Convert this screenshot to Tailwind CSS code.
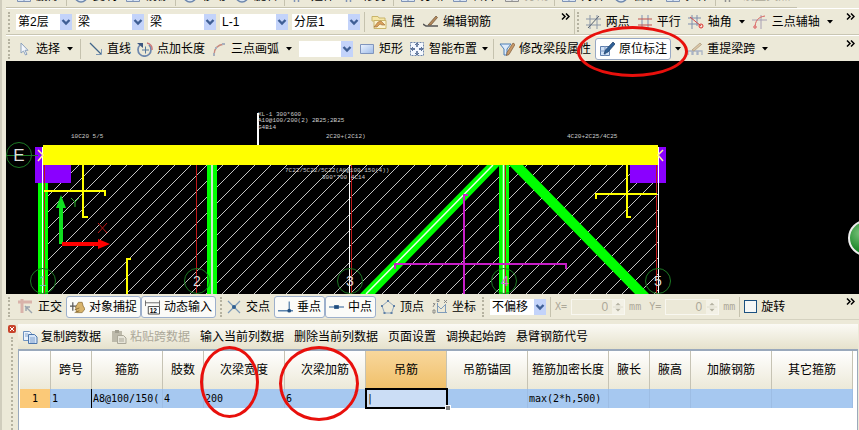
<!DOCTYPE html>
<html lang="zh-CN">
<head>
    <meta charset="UTF-8">
    <meta name="viewport" content="width=device-width, initial-scale=1.0">
    <title>梁原位标注</title>
    <script src="https://cdn.jsdelivr.net/npm/@tailwindcss/browser@4"></script>
</head>
<body class="bg-[#ece9d8] text-black text-[12px] leading-4 font-['Liberation_Sans','Noto_Sans_CJK_SC',sans-serif]">

<!-- Shared glyphs -->
<svg class="hidden">
    <symbol id="chev" viewBox="0 0 12 16"><path d="M2.500 6l3.500 3.500L9.500 6" fill="none" stroke="#3f5f95" stroke-width="2.400"/></symbol>
    <symbol id="tri" viewBox="0 0 6 4"><path d="M0 0h6L3 3.500z"/></symbol>
    <symbol id="more" viewBox="0 0 9 7"><path d="M1 .5l3 3-3 3M5 .5l3 3-3 3" fill="none" stroke="#000" stroke-width="1.500"/></symbol>
    <symbol id="spin" viewBox="0 0 12 16"><path d="M3 6l3-3 3 3zM3 10l3 3 3-3z" fill="#b5b2a2"/><path d="M0 8h12" stroke="#dcd9c8"/></symbol>
    <symbol id="bars" viewBox="0 0 16 16"><path d="M3.500 2v12M7.500 2v12M11.500 2v9" fill="none" stroke="#7f93b5" stroke-width="1.500"/></symbol>
    <symbol id="disc" viewBox="0 0 16 16"><circle cx="8" cy="8" r="6" fill="#dbe6f4" stroke="#6d87ad" stroke-width="1.500"/></symbol>
    <symbol id="box" viewBox="0 0 16 16"><path d="M1.500 3.500h13v10h-13zM8 3v10" fill="#dbe6f4" stroke="#7f93b5"/></symbol>
</svg>

<div class="min-h-screen flex flex-col pl-1 border-l-2 border-l-[#d0cdbd] overflow-hidden">

    <!-- Edit toolbar, scrolled mostly out of view -->
    <div class="h-2 shrink-0 overflow-hidden flex items-end border-b border-[#c5c2ae] whitespace-nowrap mr-[62px]">
        <div class="flex items-center gap-2 pl-[10px] pb-px">
            <button class="flex gap-1"><svg class="size-4"><use href="#box"/></svg>删除</button>
            <span class="w-px h-5 bg-[#c5c2ae] -mx-0.5"></span>
            <button class="flex gap-1"><svg class="size-4"><use href="#disc"/></svg>复制</button>
            <button class="flex gap-1"><svg class="size-4"><use href="#box"/></svg>镜像</button>
            <span class="w-px h-5 bg-[#c5c2ae] -mx-0.5"></span>
            <button class="flex gap-1"><svg class="size-4"><use href="#disc"/></svg>移动</button>
            <button class="flex gap-1"><svg class="size-4"><use href="#disc"/></svg>旋转</button>
            <span class="w-px h-5 bg-[#c5c2ae] -mx-0.5"></span>
            <button class="flex gap-1"><svg class="size-4"><use href="#bars"/></svg>延伸</button>
            <button class="flex gap-1"><svg class="size-4"><use href="#bars"/></svg>修剪</button>
            <span class="w-px h-5 bg-[#c5c2ae] -mx-0.5"></span>
            <button class="flex gap-1"><svg class="size-4"><use href="#box"/></svg>打断</button>
            <button class="flex gap-1"><svg class="size-4"><use href="#box"/></svg>合并</button>
            <button class="flex gap-1 text-[#aca899]"><svg class="size-4 grayscale"><use href="#box"/></svg>分割</button>
            <span class="w-px h-5 bg-[#c5c2ae] -mx-0.5"></span>
            <button class="flex gap-1"><svg class="size-4"><use href="#box"/></svg>对齐</button>
            <button class="flex gap-1"><svg class="size-4"><use href="#disc"/></svg>偏移</button>
            <button class="flex gap-1"><svg class="size-4"><use href="#box"/></svg>拉伸</button>
            <span class="w-px h-5 bg-[#c5c2ae] -mx-0.5"></span>
            <button class="flex gap-1 text-[#aca899]"><svg class="size-4 grayscale"><use href="#bars"/></svg>设置夹点</button>
        </div>
    </div>

    <!-- Component selectors / axis toolbar -->
    <div class="h-[27px] shrink-0 flex border-t border-t-white border-b border-b-[#c9c6b3] whitespace-nowrap">
        <div class="w-2/3 flex items-center pl-0.5 pr-1 gap-1 border-r border-[#c5c2ae]">
            <span class="h-5 border-l-2 border-dotted border-[#b5b2a0] mr-0.5"></span>
            <label class="relative w-14 h-4"><select aria-label="楼层" class="appearance-none w-full h-full bg-white pl-0.5 leading-4 outline-none"><option>第2层</option></select><svg class="absolute right-0 top-0 w-3 h-4 bg-[#c3d3fa] pointer-events-none"><use href="#chev"/></svg></label>
            <label class="relative w-[68px] h-4"><select aria-label="构件类别" class="appearance-none w-full h-full bg-white pl-0.5 leading-4 outline-none"><option>梁</option></select><svg class="absolute right-0 top-0 w-3 h-4 bg-[#c3d3fa] pointer-events-none"><use href="#chev"/></svg></label>
            <label class="relative w-[68px] h-4"><select aria-label="构件类型" class="appearance-none w-full h-full bg-white pl-0.5 leading-4 outline-none"><option>梁</option></select><svg class="absolute right-0 top-0 w-3 h-4 bg-[#c3d3fa] pointer-events-none"><use href="#chev"/></svg></label>
            <label class="relative w-[68px] h-4"><select aria-label="构件名称" class="appearance-none w-full h-full bg-white pl-0.5 leading-4 outline-none"><option>L-1</option></select><svg class="absolute right-0 top-0 w-3 h-4 bg-[#c3d3fa] pointer-events-none"><use href="#chev"/></svg></label>
            <label class="relative w-[68px] h-4"><select aria-label="分层" class="appearance-none w-full h-full bg-white pl-0.5 leading-4 outline-none"><option>分层1</option></select><svg class="absolute right-0 top-0 w-3 h-4 bg-[#c3d3fa] pointer-events-none"><use href="#chev"/></svg></label>
            <span class="w-px h-5 bg-[#c5c2ae]"></span>
            <button class="flex items-center gap-1 ml-0.5">
                <svg class="size-4" viewBox="0 0 16 16"><path d="M1 2.500h6l1 1.500h6v3H1z" fill="#f6e7a8" stroke="#c9b56a"/><path d="M3 6.500h12v8H3z" fill="#fbf3cf" stroke="#c9b56a"/><path d="M3 13l4-5 3-1 4 4-3 0-2-1-3 3z" fill="#d9a15c" stroke="#9c6a35" stroke-width=".6"/></svg>属性</button>
            <button class="flex items-center gap-1 ml-1">
                <svg class="size-4" viewBox="0 0 16 16"><path d="M0 10l3 2h12" fill="none" stroke="#555" stroke-width="1.500"/><path d="M5 11l8-9 1.500 1.500L8 11z" fill="#b58a5c" stroke="#6b5138" stroke-width=".7"/></svg>编辑钢筋</button>
            <button aria-label="更多" class="ml-auto self-start mt-1"><svg class="w-[9px] h-[7px]"><use href="#more"/></svg></button>
        </div>
        <div class="w-1/3 flex items-center pl-0.5 pr-1 gap-[7px]">
            <span class="h-5 border-l-2 border-dotted border-[#b5b2a0]"></span>
            <button class="flex items-center gap-1">
                <svg class="size-4" viewBox="0 0 16 16" fill="none"><path d="M4 1v14M11 1v14M0 5h15M0 11h15" stroke="#8b97a8"/><path d="M2 14L13 2" stroke="#55606e"/></svg>两点</button>
            <button class="flex items-center gap-1">
                <svg class="size-4" viewBox="0 0 16 16" fill="none"><path d="M5 1v14M11 1v14" stroke="#7f93b5"/><path d="M1 5h14M1 11h14" stroke="#c0504d"/></svg>平行</button>
            <button class="flex items-center gap-1">
                <svg class="size-4" viewBox="0 0 16 16" fill="none"><path d="M4 1v14M9 1v11M0 4h13M0 10h11" stroke="#7f8fae"/><path d="M2 3l11 9" stroke="#d24b4b"/><circle cx="13" cy="12" r="2" stroke="#e03030"/></svg>轴角</button>
            <svg class="w-1.5 h-1"><use href="#tri"/></svg>
            <button class="flex items-center gap-1">
                <svg class="size-4" viewBox="0 0 16 16" fill="none"><path d="M9 1v14M0 6h15" stroke="#a8a0b4"/><path d="M3 14C3 7 6 3 13 2" stroke="#d9605c"/><circle cx="3" cy="13" r="1.300" stroke="#e07070"/></svg>三点辅轴</button>
            <svg class="w-1.5 h-1"><use href="#tri"/></svg>
            <button aria-label="更多" class="ml-auto self-start mt-1"><svg class="w-[9px] h-[7px]"><use href="#more"/></svg></button>
        </div>
    </div>

    <!-- Drawing toolbar -->
    <div class="relative h-[26px] shrink-0 flex items-center pl-0.5 pr-1 gap-1.5 border-t border-white whitespace-nowrap">
        <span class="h-5 border-l-2 border-dotted border-[#b5b2a0]"></span>
        <button class="flex items-center gap-1">
            <svg class="size-4" viewBox="0 0 16 16"><path d="M5 2v10l2.500-2 2 4 1.500-.7-2-4H12z" fill="#f4f7fb" stroke="#8da2bd"/></svg>选择</button>
        <svg class="w-1.5 h-1 mx-px"><use href="#tri"/></svg>
        <span class="w-px h-5 bg-[#c5c2ae]"></span>
        <button class="flex items-center gap-1">
            <svg class="size-4" viewBox="0 0 16 16" fill="none"><path d="M3 2l11 11" stroke="#41658a" stroke-width="1.300"/><path d="M9 13.500h5.500V8" stroke="#7d98b5"/></svg>直线</button>
        <button class="flex items-center gap-1">
            <svg class="size-4" viewBox="0 0 16 16" fill="none"><path d="M3 4a6.500 6.500 0 1 0 9 0" stroke="#6d87ad" stroke-width="1.700"/><path d="M10 2a6 6 0 0 1 5 7" stroke="#c77" stroke-width="1.400"/><path d="M0 2h6v5z" fill="#3c5680"/><path d="M5 9h7M8.500 5.500v7" stroke="#56789c"/></svg>点加长度</button>
        <button class="flex items-center gap-1">
            <svg class="size-4" viewBox="0 0 16 16" fill="none"><path d="M3 14C3 8 6 4 13 3" stroke="#c88b80" stroke-width="1.500"/><path d="M2 12h2v3H2zM11 2h3v2h-3zM4 6h2v2H4z" fill="#a8b0bd"/></svg>三点画弧</button>
        <svg class="w-1.5 h-1 mx-px"><use href="#tri"/></svg>
        <label class="relative w-[54px] h-4"><select aria-label="绘制方式" class="appearance-none w-full h-full bg-white outline-none"><option></option></select><svg class="absolute right-0 top-0 w-3 h-4 bg-[#c3d3fa] pointer-events-none"><use href="#chev"/></svg></label>
        <button class="flex items-center gap-1">
            <svg class="size-4" viewBox="0 0 16 16"><defs><linearGradient id="rect" x2="1" y2="1"><stop stop-color="#eef4ff"/><stop offset="1" stop-color="#9dbbe8"/></linearGradient></defs><path d="M1.500 3.500h13v9h-13z" fill="url(#rect)" stroke="#8095bd"/></svg>矩形</button>
        <button class="flex items-center gap-1">
            <svg class="size-4" viewBox="0 0 16 16" fill="none"><path d="M1.500 1.500h13v13h-13z" fill="#f4f8ff" stroke="#6f87ac" stroke-dasharray="2 1"/><path d="M8 3v3M8 10v3M3 8h3M10 8h3" stroke="#344f7d" stroke-width="1.300"/><path d="M6 4l2-2 2 2M6 12l2 2 2-2M4 6L2 8l2 2M12 6l2 2-2 2" stroke="#344f7d" stroke-width=".8"/></svg>智能布置</button>
        <svg class="w-1.5 h-1 -ml-px"><use href="#tri"/></svg>
        <span class="w-px h-5 bg-[#c5c2ae] -mx-px"></span>
        <button class="flex items-center gap-1">
            <svg class="size-4" viewBox="0 0 16 16"><path d="M1 3h11L8 8v6H5V8z" fill="#dcebfb" stroke="#4d7fb5"/><path d="M14 2l2 1.500-6 10-2.500 1 .5-3z" fill="#c99a6a" stroke="#7c5a38" stroke-width=".7"/></svg>修改梁段属性</button>
        <button class="flex items-center gap-1 h-[22px] px-[3px] -ml-0.5 bg-white border border-[#98a9c4] rounded-[3px]">
            <svg class="size-4" viewBox="0 0 16 16"><path d="M1.500 5.500h9v9h-9z" fill="#cfe0f6" stroke="#5f7fae"/><path d="M1 10h10M6 5v10" stroke="#7d98c2"/><path d="M14 1l2 2-7 8-4 2 1.500-4z" fill="#2f6096" stroke="#1e3f68" stroke-width=".7"/></svg>原位标注</button>
        <svg class="w-1.5 h-1 -ml-0.5"><use href="#tri"/></svg>
        <button class="flex items-center gap-1">
            <svg class="size-4" viewBox="0 0 16 16" fill="none"><path d="M1 14v-4h4v4M6 14v-4h4v4M11 14v-4h4v4" stroke="#a9b3c4" stroke-width="1.300"/><path d="M5 9l8-7 1.500 1.500L7 10z" fill="#dcc6a8" stroke="#a89878" stroke-width=".7"/></svg>重提梁跨</button>
        <svg class="w-1.5 h-1 mx-px"><use href="#tri"/></svg>
        <button aria-label="更多" class="ml-auto self-start mt-1"><svg class="w-[9px] h-[7px]"><use href="#more"/></svg></button>
        <span class="absolute z-10 left-[571px] -top-[10px] w-[111px] h-[51px] rounded-[50%] border-[3px] border-[#e8100c] pointer-events-none"></span>
    </div>

    <!-- Model view -->
    <svg class="block w-full bg-black shrink-0" viewBox="6 61 853 233" preserveAspectRatio="xMinYMin meet">
        <defs>
            <pattern id="hatch" width="16" height="16" patternUnits="userSpaceOnUse"><path d="M-1 5L5-1M3 17L17 3" stroke="#d8d8d8" fill="none" stroke-width=".9"/></pattern>
            <radialGradient id="ball" cx=".35" cy=".35"><stop stop-color="#7cc47c"/><stop offset="1" stop-color="#1f8a2c"/></radialGradient>
        </defs>
        <path d="M43 165h615v129H43z" fill="url(#hatch)"/>

        <!-- columns -->
        <path d="M35 147h8v18h28v18H35zM658 147h8v36h-36v-18h28z" fill="#8a00ff"/>

        <!-- beams -->
        <g fill="#0f0">
            <path d="M38 183h10v111H38zM207 165h10v129h-10zM499 165h10v129h-10z"/>
            <path d="M487 165h13L375 294h-15zM509 165h14L649 294h-14z"/>
        </g>
        <path d="M212 165v129" stroke="#c9e8c9" stroke-width="2"/>
        <path d="M493 165L366 294M503.500 165v129" stroke="#eaffea" stroke-width="1.500"/>
        <path d="M196.500 165v129M505.500 165v129M351.500 165v129M656.500 165v129M44.500 165v129" stroke="#c01818" stroke-width="1"/>
        <path d="M42.500 147v147M349.500 165v129M658.500 147v147" stroke="#fff" stroke-width="1"/>
        <path d="M43 145h615v20H43z" fill="#ff0"/>
        <path d="M258 113v32" stroke="#fff" stroke-width="2"/>
        <path d="M38 150l5 5-5 6M663 150l-5 5 5 6" fill="none" stroke="#fff2a0" stroke-width="1.500"/>

        <!-- slab bars -->
        <path d="M83 165v52h5M44 191h61v5M131 259h-4v35M627 165v52h4M657 194h-61v5" fill="none" stroke="#ff0" stroke-width="2"/>
        <path d="M468 195h-4v99M395 269v-5h171v5" fill="none" stroke="#c81ec8" stroke-width="2"/>

        <!-- axis bubbles -->
        <g fill="none" stroke="#1c7a24">
            <circle cx="19" cy="155" r="12.500"/><path d="M6 155.500h32"/>
            <circle cx="43" cy="281" r="12.500"/><circle cx="197" cy="281" r="12.500"/><circle cx="350" cy="281" r="12.500"/><circle cx="504" cy="281" r="12.500"/><circle cx="658" cy="281" r="12.500"/>
        </g>
        <g fill="#ddd" font-family="Liberation Sans" font-size="14" text-anchor="middle">
            <text x="19" y="161" font-size="17">E</text>
            <text x="43" y="286" fill="#5fd0b0">1</text>
            <text x="197" y="286">2</text>
            <text x="350" y="286">3</text>
            <text x="505" y="286" fill="#d070d0">4</text>
            <text x="658" y="286">5</text>
        </g>

        <!-- UCS -->
        <path d="M59 244v-36h-3l5-13 5 13h-3v36z" fill="#10e020"/>
        <path d="M62 242h36v-3l12 5-12 5v-3H62z" fill="#f00"/>
        <path d="M71 198l4 4 4-4M75 202v5" fill="none" stroke="#2fb52f"/>
        <path d="M98 223l9 10M107 223l-9 10" stroke="#c01818"/>

        <!-- reinforcement notes -->
        <g fill="#ccc" font-family="Liberation Mono" font-size="6">
            <text x="71" y="138">10C20 5/5</text>
            <text x="258" y="116">XL-1 300*600</text>
            <text x="258" y="122">A10@100/200(2) 2B25;2B25</text>
            <text x="258" y="129">G4B14</text>
            <text x="326" y="138">2C20+(2C12)</text>
            <text x="567" y="138">4C20+2C25/4C25</text>
            <text x="285" y="172">7C22/5C22/5C22(A8@100/150(4))</text>
            <text x="322" y="179">300*700 4C14</text>
        </g>

        <circle cx="866" cy="238" r="17" fill="url(#ball)" stroke="#eee" stroke-width="2"/>
    </svg>

    <!-- Snap toolbar -->
    <div class="h-[26px] shrink-0 flex items-center pl-0.5 pr-1 gap-1 border-b border-[#d5d2c0] whitespace-nowrap">
        <span class="h-5 border-l-2 border-dotted border-[#b5b2a0] mr-1"></span>
        <button class="flex items-center gap-1">
            <svg class="size-4" viewBox="0 0 16 16" fill="none"><path d="M0 3h14M4 0v14" stroke="#d9b3aa" stroke-width="3"/><path d="M7 7l7 7M8 12V8h4" stroke="#9aa3ad" stroke-width="1.400"/></svg>正交</button>
        <div class="flex">
            <button class="flex items-center gap-1 h-[22px] w-[75px] px-[3px] bg-[#fbfbf8] border border-[#9db0cc] rounded-[3px]">
                <svg class="size-4" viewBox="0 0 16 16"><path d="M0 7h8M3 3v9" stroke="#555" stroke-width="1.300"/><path d="M6 8l3-5h4l1 4 2 3-3 4H7z" fill="#d8b36a" stroke="#8b6d36" stroke-width=".8"/><path d="M5 11l5-2M5 14l5-2" stroke="#8b6d36"/></svg>对象捕捉</button>
            <button class="flex items-center gap-1 h-[22px] w-[75px] px-[3px] bg-[#fbfbf8] border border-[#9db0cc] rounded-[3px]">
                <svg class="size-4" viewBox="0 0 16 16" fill="none"><path d="M0 3.500h16M.5 1v6M15.500 1v6" stroke="#666"/><path d="M3.500 7.500h12v8h-12z" fill="#fff" stroke="#444"/><text x="5" y="14" fill="#000" font-size="7" font-family="Liberation Sans" font-weight="700">12</text></svg>动态输入</button>
        </div>
        <span class="h-5 border-l-2 border-dotted border-[#b5b2a0]"></span>
        <button class="flex items-center gap-1">
            <svg class="size-4" viewBox="0 0 16 16"><path d="M2 2l12 12M14 2L2 14" stroke="#7d9ab8" stroke-width="1.200"/><circle cx="8" cy="8" r="2" fill="#2f5f92"/></svg>交点</button>
        <div class="flex">
            <button class="flex items-center gap-1 h-[22px] w-[51px] px-[3px] bg-[#fbfbf8] border border-[#9db0cc] rounded-[3px]">
                <svg class="size-4" viewBox="0 0 16 16"><path d="M0 12h16M12 2v10" stroke="#5b83ad" stroke-width="1.400"/><circle cx="12" cy="12" r="2" fill="#1f4d80"/></svg>垂点</button>
            <button class="flex items-center gap-1 h-[22px] w-[51px] px-[3px] bg-[#fbfbf8] border border-[#9db0cc] rounded-[3px]">
                <svg class="size-4" viewBox="0 0 16 16"><path d="M0 8h16" stroke="#5b83ad" stroke-width="1.400"/><path d="M5.500 6h5v4h-5z" fill="#1f4d80"/></svg>中点</button>
        </div>
        <button class="flex items-center gap-1">
            <svg class="size-4" viewBox="0 0 16 16" fill="none"><path d="M8 2l6 5-2.500 7h-7L2 7z" stroke="#8ea6c0"/><path d="M7 1h2v2H7zM13 6h2v2h-2zM1 6h2v2H1zM3.500 13h2v2h-2zM10.500 13h2v2h-2z" fill="#5f80a5"/></svg>顶点</button>
        <button class="flex items-center gap-1 ml-1">
            <svg class="size-4" viewBox="0 0 16 16" fill="none"><path d="M5.500 4v9.500H15M5 6l4 4 5-5M13.500 6v8" stroke="#7f9cba"/><path d="M1 4l2 2M3 4l-2 4M12 1l3 3M15 1l-3 3M1 11h2v3H1zM5 .5h2v2H5z" stroke="#777" stroke-width=".8"/></svg>坐标</button>
        <span class="h-5 border-l-2 border-dotted border-[#b5b2a0] mx-0.5"></span>
        <label class="relative w-14 h-4"><select aria-label="偏移方式" class="appearance-none w-full h-full bg-white pl-0.5 leading-4 outline-none"><option>不偏移</option></select><svg class="absolute right-0 top-0 w-3 h-4 bg-[#c3d3fa] pointer-events-none"><use href="#chev"/></svg></label>
        <span class="w-px h-5 bg-[#c5c2ae]"></span>
        <label for="dx" class="text-[#aca899] font-['DejaVu_Sans_Mono',monospace] text-[10px]">X=</label>
        <div class="flex h-4 w-[54px] border border-[#f8f7f0]">
            <input id="dx" type="text" value="0" disabled class="min-w-0 flex-1 bg-transparent text-right text-[#aca899] pr-1">
            <svg class="w-3 h-full bg-[#f3f1e6]" viewBox="0 0 12 16"><use href="#spin"/></svg>
        </div>
        <span class="text-[#aca899] font-['DejaVu_Sans_Mono',monospace] text-[10px] mr-1">mm</span>
        <label for="dy" class="text-[#aca899] font-['DejaVu_Sans_Mono',monospace] text-[10px]">Y=</label>
        <div class="flex h-4 w-[54px] border border-[#f8f7f0]">
            <input id="dy" type="text" value="0" disabled class="min-w-0 flex-1 bg-transparent text-right text-[#aca899] pr-1">
            <svg class="w-3 h-full bg-[#f3f1e6]" viewBox="0 0 12 16"><use href="#spin"/></svg>
        </div>
        <span class="text-[#aca899] font-['DejaVu_Sans_Mono',monospace] text-[10px]">mm</span>
        <span class="w-px h-5 bg-[#c5c2ae]"></span>
        <input id="rotate" type="checkbox" class="appearance-none size-[13px] border border-[#1c5180] bg-[#f7f8f6]">
        <label for="rotate">旋转</label>
        <button aria-label="更多" class="ml-auto self-start mt-1"><svg class="w-[9px] h-[7px]"><use href="#more"/></svg></button>
    </div>

    <!-- In-place annotation panel -->
    <div class="relative flex-1 flex mt-1 pr-px">
        <div class="w-3 shrink-0 flex flex-col items-center gap-1 pt-px">
            <button aria-label="关闭" class="size-2 bg-[#c8442c] rounded-[2px] flex"><svg class="size-2" viewBox="0 0 8 8"><path d="M2 2l4 4M6 2L2 6" stroke="#fff"/></svg></button>
            <span class="flex-1 border-l-2 border-dotted border-[#b5b2a0]"></span>
        </div>
        <div class="flex-1 flex flex-col">
            <div class="h-[25px] flex items-center gap-[10px] pl-1 bg-linear-to-b from-[#fbfaf5] to-[#e6e2cc] whitespace-nowrap">
                <button class="flex items-center gap-[3px]">
                    <svg class="size-4" viewBox="0 0 16 16"><path d="M1.500 2.500h6l2 2v7h-8z" fill="#eaf2fc" stroke="#6f93c0"/><path d="M6.500 5.500h6l2.500 2.500v6.500H6.500z" fill="#d5e5f8" stroke="#4c76ac"/><path d="M8 9h5M8 11h5M8 13h5M3 5h3M3 7h3" stroke="#6f93c0" stroke-width=".8"/></svg>复制跨数据</button>
                <button disabled class="flex items-center gap-[3px] text-[#aca899]">
                    <svg class="size-4" viewBox="0 0 16 16"><path d="M1 2h10v11H1z" fill="#bdbaab"/><path d="M4 1h4v3H4z" fill="#a19e90"/><path d="M6.500 6.500h6l2.500 2.500v5.500H6.500z" fill="#e6e4d8" stroke="#aaa798"/><path d="M8 10h5M8 12h5" stroke="#aaa798"/></svg>粘贴跨数据</button>
                <button>输入当前列数据</button>
                <button>删除当前列数据</button>
                <button>页面设置</button>
                <button>调换起始跨</button>
                <button>悬臂钢筋代号</button>
            </div>
            <div class="flex-1 bg-white border-t-2 border-l border-r border-[#9aa9bc] pr-1 pl-px">
                <table class="table-fixed w-full border-separate border-spacing-0">
                    <colgroup>
                        <col class="w-[31px]"><col class="w-[41px]"><col class="w-[71px]"><col class="w-[41px]"><col class="w-[81px]"><col class="w-[81px]"><col class="w-[81px]"><col class="w-[81px]"><col class="w-[81px]"><col class="w-[41px]"><col class="w-[41px]"><col class="w-[81px]"><col>
                    </colgroup>
                    <thead>
                        <tr class="h-[38px] bg-linear-to-b from-white to-[#ece9d8] whitespace-nowrap *:font-normal *:p-0 *:border-r *:border-[#c6c3b4]">
                            <th></th>
                            <th>跨号</th>
                            <th>箍筋</th>
                            <th>肢数</th>
                            <th>次梁宽度</th>
                            <th>次梁加筋</th>
                            <th class="bg-linear-to-b from-[#f8d79c] to-[#f0c068]">吊筋</th>
                            <th>吊筋锚固</th>
                            <th>箍筋加密长度</th>
                            <th>腋长</th>
                            <th>腋高</th>
                            <th>加腋钢筋</th>
                            <th>其它箍筋</th>
                        </tr>
                    </thead>
                    <tbody>
                        <tr class="h-[19px] bg-[#a6c8f0] font-['DejaVu_Sans_Mono',monospace] text-[10px] whitespace-nowrap *:py-0 *:px-px *:border-r *:border-[#9dbde4]">
                            <td class="bg-[#fbc978] text-center">1</td>
                            <td class="border-r-black!">1</td>
                            <td class="overflow-hidden">A8@100/150(</td>
                            <td>4</td>
                            <td>200</td>
                            <td>6</td>
                            <td class="relative bg-[#cbddf5] outline-2 -outline-offset-1 outline-black">
                                <input type="text" aria-label="吊筋" value="|" class="block w-full h-4 outline-none">
                                <span class="absolute -right-1 -bottom-0.5 size-1 bg-[#808080] outline outline-white"></span>
                            </td>
                            <td></td>
                            <td>max(2*h,500)</td>
                            <td></td>
                            <td></td>
                            <td></td>
                            <td></td>
                        </tr>
                    </tbody>
                </table>
            </div>
        </div>
        <span class="absolute left-[194px] top-[22px] w-[59px] h-[72px] rounded-[50%] border-[3px] border-[#e8100c] pointer-events-none"></span>
        <span class="absolute left-[273px] top-[22px] w-20 h-[75px] rounded-[50%] border-[3px] border-[#e8100c] pointer-events-none"></span>
    </div>
</div>

</body>
</html>
